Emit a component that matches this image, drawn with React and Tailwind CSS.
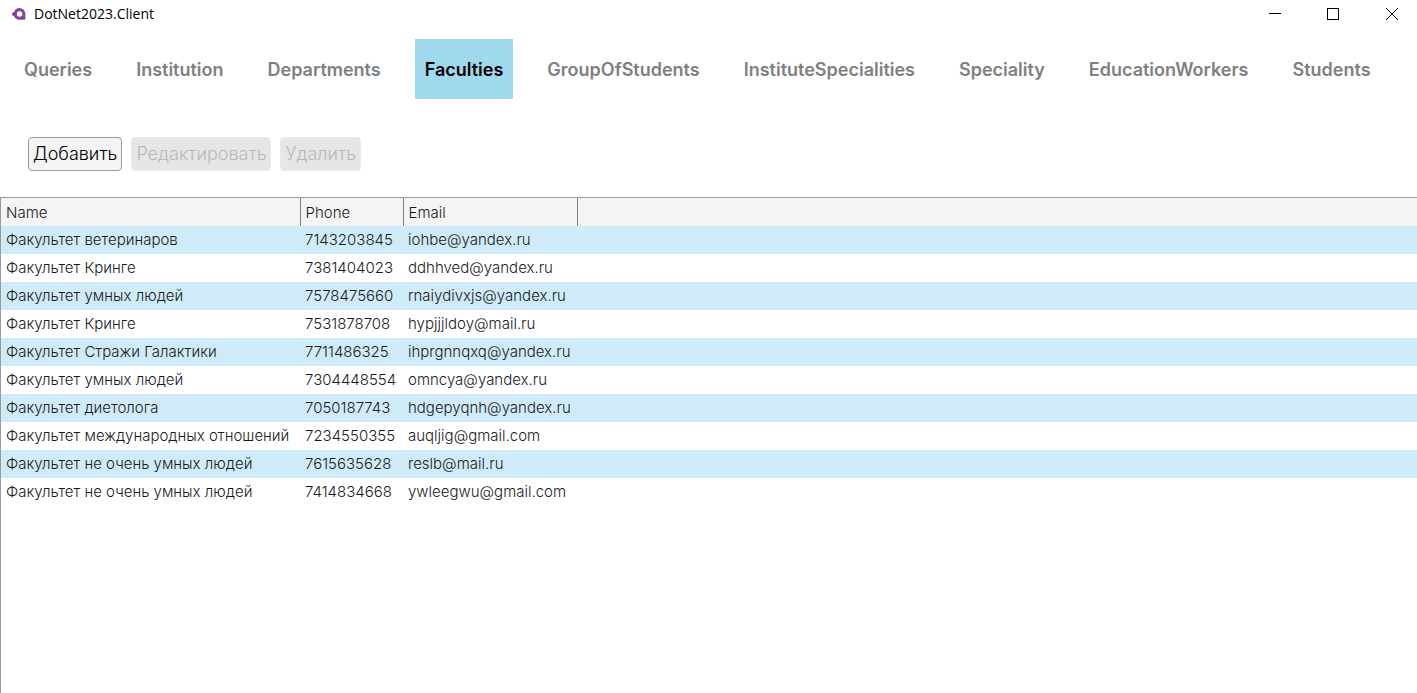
import { useState } from "react";

const tabs = [
  "Queries",
  "Institution",
  "Departments",
  "Faculties",
  "GroupOfStudents",
  "InstituteSpecialities",
  "Speciality",
  "EducationWorkers",
  "Students",
];

const columns = [
  { title: "Name", width: "min-w-[299px]" },
  { title: "Phone", width: "min-w-[103px]" },
  { title: "Email", width: "min-w-[174px]" },
];

const rows = [
  ["Факультет ветеринаров", "7143203845", "iohbe@yandex.ru"],
  ["Факультет Кринге", "7381404023", "ddhhved@yandex.ru"],
  ["Факультет умных людей", "7578475660", "rnaiydivxjs@yandex.ru"],
  ["Факультет Кринге", "7531878708", "hypjjjldoy@mail.ru"],
  ["Факультет Стражи Галактики", "7711486325", "ihprgnnqxq@yandex.ru"],
  ["Факультет умных людей", "7304448554", "omncya@yandex.ru"],
  ["Факультет диетолога", "7050187743", "hdgepyqnh@yandex.ru"],
  ["Факультет международных отношений", "7234550355", "auqljig@gmail.com"],
  ["Факультет не очень умных людей", "7615635628", "reslb@mail.ru"],
  ["Факультет не очень умных людей", "7414834668", "ywleegwu@gmail.com"],
];

function AppLogo() {
  return (
    <svg width="14" height="14" viewBox="0 0 14 14" aria-hidden="true">
      <path
        d="M7.4 1a6 6 0 0 1 6 6v4.6a1.2 1.2 0 0 1-1.2 1.2H7.4A6 6 0 0 1 1.9 9 1.9 1.9 0 0 1 1.9 5.2 6 6 0 0 1 7.4 1Z"
        fill="#8348a3"
      />
      <circle cx="7.6" cy="7" r="2.7" fill="#fff" />
      <circle cx="2" cy="7.1" r="1" fill="#5f2b80" />
    </svg>
  );
}

function TitleBar() {
  return (
    <header className="flex h-7 items-center justify-between pl-3">
      <div className="flex items-center gap-2">
        <AppLogo />
        <h1 className="font-['Open_Sans',sans-serif] text-sm text-black">DotNet2023.Client</h1>
      </div>
      <div className="flex h-full">
        <button type="button" aria-label="Minimize" className="flex w-[58px] items-center justify-center">
          <svg width="12" height="12" viewBox="0 0 12 12" shapeRendering="crispEdges">
            <path d="M0 5.5h12" stroke="#000" />
          </svg>
        </button>
        <button type="button" aria-label="Maximize" className="flex w-[58px] items-center justify-center">
          <svg width="12" height="12" viewBox="0 0 12 12" shapeRendering="crispEdges">
            <path d="M.5 .5h11v11H.5Z" fill="none" stroke="#000" />
          </svg>
        </button>
        <button type="button" aria-label="Close" className="flex w-[55px] items-center justify-center pl-1">
          <svg width="12" height="12" viewBox="0 0 12 12">
            <path d="M0 0 12 12M12 0 0 12" stroke="#000" />
          </svg>
        </button>
      </div>
    </header>
  );
}

function Tabs({ active, onSelect }) {
  return (
    <nav className="mt-[11px] flex gap-6 pl-[14px]">
      {tabs.map((tab) => (
        <button
          key={tab}
          type="button"
          aria-current={tab === active ? "page" : undefined}
          onClick={() => onSelect(tab)}
          className={
            tab === active
              ? "h-[60px] bg-[#a0d8ed] px-[10px] pt-[2px] text-lg font-semibold text-black"
              : "h-[60px] px-[10px] pt-[2px] text-lg font-semibold text-[#808080]"
          }
        >
          {tab}
        </button>
      ))}
    </nav>
  );
}

function Toolbar() {
  const button = "h-[34px] rounded-[4px] border px-1 text-lg font-light";
  return (
    <div className="flex gap-[9px] px-7 pt-[38px] pb-[26px]">
      <button type="button" className={`${button} border-[#9a9a9a] bg-[#f4f4f4] text-black`}>
        Добавить
      </button>
      <button type="button" disabled className={`${button} border-[#eaeaea] bg-[#e6e6e6] text-[#b8b8b8]`}>
        Редактировать
      </button>
      <button type="button" disabled className={`${button} border-[#eaeaea] bg-[#e6e6e6] text-[#b8b8b8]`}>
        Удалить
      </button>
    </div>
  );
}

function FacultyTable() {
  return (
    <main className="grow border-t border-l border-[#999999]">
      <table className="w-full text-[15px] font-[350] text-[#1a1a1a]">
        <thead>
          <tr className="h-7 bg-[#f4f4f4] text-left">
            {columns.map(({ title, width }) => (
              <th
                key={title}
                scope="col"
                className={`${width} border-r border-[#808088] px-[5px] pt-[2px] font-[350]`}
              >
                {title}
              </th>
            ))}
            <td className="w-full" />
          </tr>
        </thead>
        <tbody>
          {rows.map((row, index) => (
            <tr key={index} className="h-7 odd:bg-[#d0ebf8]">
              {row.map((value) => (
                <td key={value} className="px-[5px] whitespace-nowrap">
                  {value}
                </td>
              ))}
              <td />
            </tr>
          ))}
        </tbody>
      </table>
    </main>
  );
}

export default function App() {
  const [active, setActive] = useState("Faculties");
  return (
    <div className="flex min-h-screen flex-col bg-white font-['Inter',sans-serif]">
      <TitleBar />
      <Tabs active={active} onSelect={setActive} />
      <Toolbar />
      <FacultyTable />
    </div>
  );
}
